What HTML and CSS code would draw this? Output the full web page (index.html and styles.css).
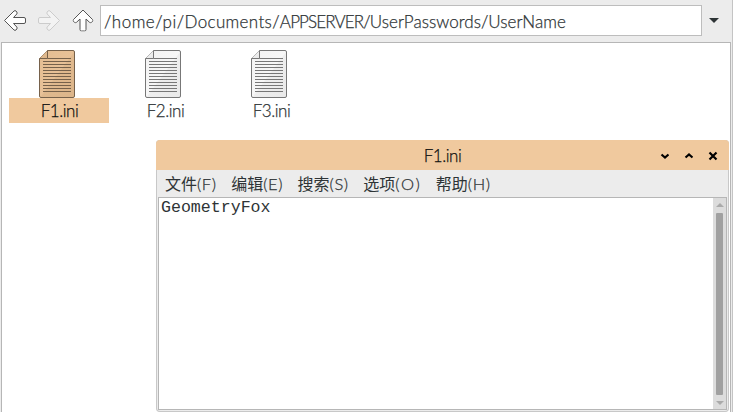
FILE: index.html
```
<!DOCTYPE html>
<html lang="zh-CN">
<head>
<meta charset="utf-8">
<title>F1.ini</title>
<link rel="stylesheet" href="styles.css">
</head>
<body>
<svg width="0" height="0" class="defs" aria-hidden="true">
  <defs>
    <linearGradient id="paper" x1="0" y1="0" x2="1" y2="1">
      <stop offset="0" stop-color="#f2f2f2"/><stop offset=".5" stop-color="#f7f7f7"/><stop offset=".52" stop-color="#eeeeee"/><stop offset="1" stop-color="#e9e9e9"/>
    </linearGradient>
    <linearGradient id="paper-selected" x1="0" y1="0" x2="1" y2="1">
      <stop offset="0" stop-color="#e4bd92"/><stop offset=".5" stop-color="#e8c197"/><stop offset=".52" stop-color="#e0b98e"/><stop offset="1" stop-color="#dcb58a"/>
    </linearGradient>
    <symbol id="doc" viewBox="0 0 36 48">
      <path d="M8.5.5H34q1.5 0 1.5 1.5v44q0 1.5-1.5 1.5H2Q.5 47.500.5 46V8.500Z"/>
      <path d="M8.500.5v8H.5" class="fold"/>
      <path d="M8.500 8.500h23.500M4 11.500h28M4 14.500h28M4 17.500h28M4 20.500h28M4 23.500h28M4 26.500h28M4 29.500h28M4 32.500h28M4 35.500h28M4 38.500h28M4 41.500h28"/>
    </symbol>
    <symbol id="arrow" viewBox="0 0 22 21">
      <path d="M.5 10.500 10 1q1-.8 2 0l.8 1q.7 1 0 2L9.500 7.500H20q1.500 0 1.500 1.500v3q0 1.500-1.500 1.500H9.500l3.300 3.500q.7 1 0 2l-.8 1q-1 .8-2 0Z"/>
    </symbol>
  </defs>
</svg>
<main class="manager">
  <header class="toolbar">
    <nav class="nav">
      <svg class="arrow"><use href="#arrow"/></svg>
      <svg class="arrow forward"><use href="#arrow"/></svg>
      <svg class="arrow up"><use href="#arrow"/></svg>
    </nav>
    <div class="address"><span class="home">/home/pi/</span><span class="documents">Documents/</span><span class="server">APPSERVER/</span><span>UserPasswords/UserName</span></div>
    <svg class="dropdown" viewBox="0 0 10 5"><path d="M0 0h10L5 5Z"/></svg>
  </header>
  <section class="files">
    <div class="file selected"><svg class="doc"><use href="#doc"/></svg><span>F1.ini</span></div>
    <div class="file"><svg class="doc"><use href="#doc"/></svg><span>F2.ini</span></div>
    <div class="file"><svg class="doc"><use href="#doc"/></svg><span>F3.ini</span></div>
  </section>
</main>
<section class="window">
  <header class="titlebar">
    <span class="title">F1.ini</span>
    <div class="controls">
      <svg viewBox="0 0 8 8"><path d="M.5 2.500 4 5.500l3.500-3"/></svg>
      <svg viewBox="0 0 8 8"><path d="M.5 5.500 4 2.500l3.500 3"/></svg>
      <svg viewBox="0 0 8 8"><path d="m.5.5 7 7m0-7-7 7"/></svg>
    </div>
  </header>
  <nav class="menu"><span>文件<i>(F)</i></span><span>编辑<i>(E)</i></span><span>搜索<i>(S)</i></span><span>选项<i class="wide">(O)</i></span><span>帮助<i>(H)</i></span></nav>
  <div class="editor">
    <div class="text">GeometryFox</div>
    <div class="scrollbar">
      <svg viewBox="0 0 8 4"><path d="M0 4h8L4 0Z"/></svg>
      <div class="thumb"></div>
      <svg viewBox="0 0 8 4"><path d="M0 0h8L4 4Z"/></svg>
    </div>
  </div>
</section>
</body>
</html>
```
FILE: styles.css
```
* { box-sizing: border-box; }
body {
  margin: 0;
  height: 412px;
  overflow: hidden;
  background: #ececec;
  color: #2e3436;
  font: 300 17px/25px Lato, "Noto Sans CJK SC", sans-serif;
}
.defs { position: absolute; }
.manager {
  display: flex;
  flex-direction: column;
  height: 412px;
  padding: 5px 1px 0 1px;
  border-right: 1px solid #c4c4c4;
}
.toolbar { display: flex; align-items: center; height: 31px; margin-bottom: 6px; }
.nav { display: flex; gap: 12px; width: 99px; padding-left: 3px; }
.arrow { width: 22px; height: 21px; fill: #fff; stroke: #555; overflow: visible; }
.forward { transform: scaleX(-1); fill: #f3f3f3; stroke: #ccc; }
.up { transform: rotate(90deg); }
.address {
  width: 602px;
  height: 31px;
  padding: 3px 3px;
  border: 1px solid #bdbdbd;
  background: #fff;
  white-space: nowrap;
  letter-spacing: .04px;
  -webkit-text-stroke: .25px;
}
.home { letter-spacing: .48px; }
.documents { letter-spacing: .34px; }
.server { letter-spacing: -.86px; }
.dropdown { width: 10px; height: 5px; margin-left: 7px; fill: #2e3436; }
.files {
  display: flex;
  gap: 6px;
  flex: 1;
  padding: 7px;
  border: 1px solid #b6b6b6;
  border-bottom: 0;
  background: #fff;
}
.file { width: 100px; text-align: center; }
.doc { display: block; width: 36px; height: 48px; margin-left: 30px; fill: url(#paper); stroke: #777; }
.file span { display: block; height: 25px; padding-left: 1px; line-height: 26px; letter-spacing: -.45px; -webkit-text-stroke: .25px; }
.selected .doc { fill: url(#paper-selected); stroke: #76614b; }
.selected span { background: #f0c99e; color: #111; }
.window {
  position: absolute;
  left: 156px;
  top: 140px;
  width: 573px;
  height: 272px;
  display: flex;
  flex-direction: column;
  border-radius: 4px;
  background: #ececec;
  overflow: hidden;
  box-shadow: inset 0 0 0 1px #c8c8c8;
}
.titlebar {
  position: relative;
  height: 30px;
  background: #f0c99e;
  color: #111;
  text-align: center;
  line-height: 32px;
  letter-spacing: -.45px;
  -webkit-text-stroke: .25px;
}
.controls { position: absolute; right: 12px; top: 12px; display: flex; gap: 16px; }
.controls svg { width: 8px; height: 8px; fill: none; stroke: #000; stroke-width: 2.200; overflow: visible; }
.menu { display: flex; height: 27px; padding-left: 9px; gap: 14.500px; font-size: 16px; font-weight: 400; line-height: 28px; white-space: nowrap; }
.menu i { font-style: normal; font-weight: 300; font-size: 16.500px; letter-spacing: .6px; -webkit-text-stroke: .25px; }
.menu .wide { letter-spacing: 1.500px; }
.editor {
  display: flex;
  flex: 1;
  margin: 0 2px 2px 2px;
  border: 1px solid #b6b6b6;
  background: #fff;
}
.text { flex: 1; padding-left: 2px; font: 16.600px/20px "Liberation Mono", monospace; }
.scrollbar { display: flex; flex-direction: column; align-items: center; width: 13px; padding: 5px 0 4px; background: #dcdcdc; }
.scrollbar svg { width: 8px; height: 4px; fill: #aaa; }
.thumb { flex: 1; width: 7px; margin: 6px 0; border-radius: 1px; background: #a0a0a0; }
```
